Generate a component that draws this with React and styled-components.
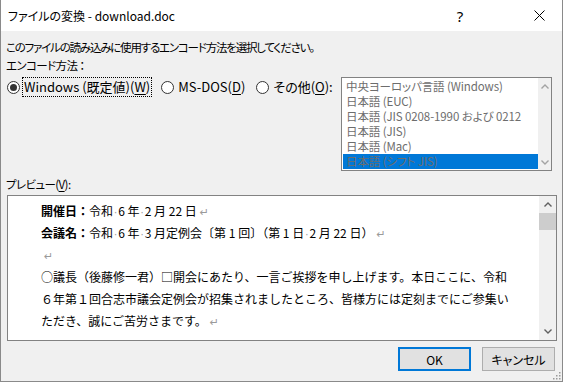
import styled, { createGlobalStyle } from "styled-components";

const GlobalStyle = createGlobalStyle`
  html, body {
    margin: 0;
    padding: 0;
    background: #ffffff;
  }
`;

const Window = styled.div`
  position: relative;
  width: 563px;
  height: 382px;
  box-sizing: border-box;
  display: flex;
  flex-direction: column;
  border: 1px solid #8a8a8a;
  border-top: none;
  font-family: "Noto Sans CJK JP", "Noto Sans", sans-serif;
  font-size: 12px;
  font-feature-settings: "palt";
  color: #000000;
  overflow: hidden;
`;

const TitleBar = styled.div`
  height: 31px;
  flex: none;
  display: flex;
  align-items: center;
  background: #ffffff;
  padding-left: 7px;
`;

const TitleText = styled.div`
  flex: 1;
  font-size: 12px;
  line-height: 16px;
`;

const TitleButton = styled.div`
  width: 46px;
  height: 31px;
  display: flex;
  align-items: center;
  justify-content: center;
  font-family: "Noto Sans", sans-serif;
  font-size: 15px;
  margin-right: ${(p) => p.$gap || 0}px;
`;

const Body = styled.div`
  flex: 1;
  display: flex;
  flex-direction: column;
  background: #f0f0f0;
  padding: 7px 5px 0 5px;
`;

const Label = styled.div`
  line-height: 18px;
  height: ${(p) => p.$h || 18}px;
  font-size: 11.5px;
  letter-spacing: ${(p) => p.$ls ?? -1.2}px;
  margin-top: ${(p) => p.$mt || 0}px;
`;

const Key = styled.span`
  text-decoration: underline;
  text-underline-offset: 2px;
`;

const OptionsRow = styled.div`
  display: flex;
  align-items: flex-start;
  margin-top: 3px;
`;

const Radios = styled.div`
  flex: 1;
  display: flex;
  gap: 9px;
  padding-left: 1px;
`;

const RadioOption = styled.div`
  display: flex;
  align-items: center;
  height: 20px;
  gap: 2px;
`;

const RadioCircle = styled.span`
  width: 13px;
  height: 13px;
  box-sizing: border-box;
  border-radius: 50%;
  border: 1px solid #333333;
  background: #ffffff;
  display: flex;
  align-items: center;
  justify-content: center;
  &::after {
    content: "";
    width: 7px;
    height: 7px;
    border-radius: 50%;
    background: ${(p) => (p.$checked ? "#333333" : "transparent")};
  }
`;

const RadioText = styled.span`
  font-size: 13px;
  line-height: 18px;
  padding: 0 1px;
  border: 1px dotted ${(p) => (p.$focus ? "#000000" : "transparent")};
`;

const ListBox = styled.div`
  width: 211px;
  height: 94px;
  box-sizing: border-box;
  border: 1px solid #828282;
  background: #ffffff;
  display: flex;
  margin-right: 5px;
`;

const ListItems = styled.div`
  flex: 1;
  padding-top: 1px;
  overflow: hidden;
`;

const ListItem = styled.div`
  height: 15px;
  line-height: 15px;
  padding-left: 3px;
  margin-left: 1px;
  overflow: hidden;
  white-space: nowrap;
  font-size: 11.5px;
  letter-spacing: -0.1px;
  color: #6d6d6d;
  background: ${(p) => (p.$selected ? "#0078d7" : "transparent")};
`;

const ScrollBar = styled.div`
  width: ${(p) => p.$w}px;
  flex: none;
  display: flex;
  flex-direction: column;
  align-items: center;
  background: #f0f0f0;
`;

const ArrowCell = styled.div`
  height: ${(p) => p.$h}px;
  width: 100%;
  display: flex;
  align-items: center;
  justify-content: center;
  flex: none;
`;

const Thumb = styled.div`
  width: 100%;
  height: 17px;
  background: #cdcdcd;
`;

const Track = styled.div`
  flex: 1;
`;

const Preview = styled.div`
  height: 146px;
  box-sizing: border-box;
  margin: 3px 0 0 1px;
  border: 1px solid #828282;
  background: #ffffff;
  display: flex;
`;

const PreviewText = styled.div`
  flex: 1;
  padding: 4px 0 0 33px;
  overflow: hidden;
  font-size: 12px;
  line-height: 22px;
  font-feature-settings: normal;
  white-space: nowrap;
`;

const Line = styled.div`
  height: 22px;
`;

const Strong = styled.span`
  font-weight: bold;
`;

const Mark = styled.span`
  color: #9a9a9a;
  font-family: "DejaVu Sans", sans-serif;
  font-size: ${(p) => p.$size || 10}px;
  margin: 0 ${(p) => p.$gap || 1}px;
`;

const Footer = styled.div`
  display: flex;
  justify-content: flex-end;
  gap: 11px;
  margin: 6px 2px 0 0;
`;

const Button = styled.div`
  width: 73px;
  height: 24px;
  box-sizing: border-box;
  display: flex;
  align-items: center;
  justify-content: center;
  background: #e1e1e1;
  border: ${(p) => (p.$default ? "2px solid #0078d7" : "1px solid #adadad")};
  font-size: 12px;
`;

const Grip = styled.svg`
  position: absolute;
  right: 1px;
  bottom: 1px;
`;

const Chevron = ({ down, color }) => (
  <svg width="8" height="5" viewBox="0 0 8 5">
    <path
      d={down ? "M0.5 0.5 L4 4 L7.5 0.5" : "M0.5 4.5 L4 1 L7.5 4.5"}
      fill="none"
      stroke={color}
      strokeWidth="1.4"
    />
  </svg>
);

const Sp = () => <Mark>·</Mark>;
const Ret = () => <Mark $size={11} $gap={3}>↵</Mark>;

const encodings = [
  "中央ヨーロッパ言語 (Windows)",
  "日本語 (EUC)",
  "日本語 (JIS 0208-1990 および 0212",
  "日本語 (JIS)",
  "日本語 (Mac)",
  "日本語 (シフト JIS)",
];

const App = () => {
  return (
    <>
      <GlobalStyle />
      <Window>
        <TitleBar>
          <TitleText>ファイルの変換 - download.doc</TitleText>
          <TitleButton $gap={33}>?</TitleButton>
          <TitleButton>
            <svg width="11" height="11" viewBox="0 0 11 11">
              <path d="M0.5 0.5 L10.5 10.5 M10.5 0.5 L0.5 10.5" stroke="#000" strokeWidth="1" />
            </svg>
          </TitleButton>
        </TitleBar>
        <Body>
          <Label>このファイルの読み込みに使用するエンコード方法を選択してください。</Label>
          <Label $ls={-0.6}>エンコード方法 ：</Label>
          <OptionsRow>
            <Radios>
              <RadioOption>
                <RadioCircle $checked />
                <RadioText $focus>
                  Windows (既定値)(<Key>W</Key>)
                </RadioText>
              </RadioOption>
              <RadioOption>
                <RadioCircle />
                <RadioText>
                  MS-DOS(<Key>D</Key>)
                </RadioText>
              </RadioOption>
              <RadioOption>
                <RadioCircle />
                <RadioText>
                  その他(<Key>O</Key>):
                </RadioText>
              </RadioOption>
            </Radios>
            <ListBox>
              <ListItems>
                {encodings.map((e, i) => (
                  <ListItem key={e} $selected={i === encodings.length - 1}>
                    {e}
                  </ListItem>
                ))}
              </ListItems>
              <ScrollBar $w={13}>
                <ArrowCell $h={16}>
                  <Chevron color="#a3a3a3" />
                </ArrowCell>
                <Track />
                <ArrowCell $h={16}>
                  <Chevron down color="#a3a3a3" />
                </ArrowCell>
              </ScrollBar>
            </ListBox>
          </OptionsRow>
          <Label $h={17} $mt={4} $ls={-0.6}>
            プレビュー(<Key>V</Key>):
          </Label>
          <Preview>
            <PreviewText>
              <Line>
                <Strong>開催日：</Strong>令和<Sp />6 年<Sp />2 月 22 日<Ret />
              </Line>
              <Line>
                <Strong>会議名：</Strong>令和<Sp />6 年<Sp />3 月定例会〔第 1 回〕（第 1 日<Sp />2 月 22 日）<Ret />
              </Line>
              <Line>
                <Ret />
              </Line>
              <Line>○議長（後藤修一君）□開会にあたり、一言ご挨拶を申し上げます。本日ここに、令和</Line>
              <Line>６年第１回合志市議会定例会が招集されましたところ、皆様方には定刻までにご参集い</Line>
              <Line>
                ただき、誠にご苦労さまです。<Ret />
              </Line>
            </PreviewText>
            <ScrollBar $w={17}>
              <ArrowCell $h={17}>
                <Chevron color="#606060" />
              </ArrowCell>
              <Thumb />
              <Track />
              <ArrowCell $h={17}>
                <Chevron down color="#606060" />
              </ArrowCell>
            </ScrollBar>
          </Preview>
          <Footer>
            <Button $default>OK</Button>
            <Button>キャンセル</Button>
          </Footer>
        </Body>
        <Grip width="10" height="10" viewBox="0 0 10 10">
          <g fill="#9a9a9a">
            <rect x="8" y="2" width="1.5" height="1.5" />
            <rect x="5" y="5" width="1.5" height="1.5" />
            <rect x="8" y="5" width="1.5" height="1.5" />
            <rect x="2" y="8" width="1.5" height="1.5" />
            <rect x="5" y="8" width="1.5" height="1.5" />
            <rect x="8" y="8" width="1.5" height="1.5" />
          </g>
        </Grip>
      </Window>
    </>
  );
};

export default App;
